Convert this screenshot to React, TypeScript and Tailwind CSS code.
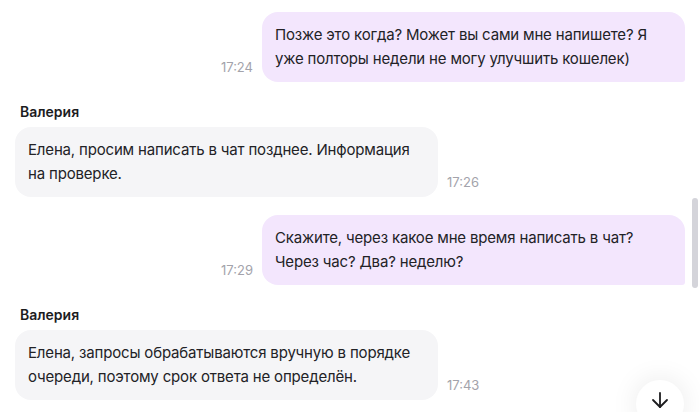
import React from 'react';
import { ArrowDown } from 'lucide-react';

type Msg = { id: number; out: boolean; author?: string; text: string; time: string };

const messages: Msg[] = [
  { id: 1, out: true, text: 'Позже это когда? Может вы сами мне напишете? Я уже полторы недели не могу улучшить кошелек)', time: '17:24' },
  { id: 2, out: false, author: 'Валерия', text: 'Елена, просим написать в чат позднее. Информация на проверке.', time: '17:26' },
  { id: 3, out: true, text: 'Скажите, через какое мне время написать в чат? Через час? Два? неделю?', time: '17:29' },
  { id: 4, out: false, author: 'Валерия', text: 'Елена, запросы обрабатываются вручную в порядке очереди, поэтому срок ответа не определён.', time: '17:43' },
];

const Bubble: React.FC<{ msg: Msg; first: boolean }> = ({ msg, first }) => {
  const time = <span className="mb-[7px] text-[13px] leading-4 text-[#a3a3ab]">{msg.time}</span>;
  return (
    <div className={`flex flex-col ${first ? '' : msg.author ? 'mt-5' : 'mt-[18px]'}`}>
      {msg.author && (
        <div className="ml-5 mb-[5px] text-[14px] font-semibold leading-5 text-[#1c1c1e]">{msg.author}</div>
      )}
      <div className={`flex items-end gap-[9px] ${msg.out ? 'justify-end pr-[15px]' : 'pl-[15px]'}`}>
        {msg.out && time}
        <div
          className={`w-[423px] px-[13px] py-[11px] text-[15px] leading-6 tracking-[-0.17px] text-[#222226] ${
            msg.out ? 'rounded-2xl rounded-br-[3px] bg-[#f3e6fd]' : 'rounded-2xl bg-[#f5f5f7]'
          }`}
        >
          {msg.text}
        </div>
        {!msg.out && time}
      </div>
    </div>
  );
};

export default function App() {
  return (
    <div className="relative h-[412px] w-[700px] overflow-hidden bg-white" style={{ fontFamily: 'Inter, "Noto Sans", sans-serif' }}>
      <div className="flex flex-col pt-3">
        {messages.map((m, i) => (
          <Bubble key={m.id} msg={m} first={i === 0} />
        ))}
      </div>
      <div className="absolute right-[2px] top-[198px] h-[90px] w-[6px] rounded-full bg-[#d4d4da]" />
      <button className="absolute left-[636px] top-[380px] flex h-12 w-12 justify-center rounded-full bg-white pt-2 text-[#1c1c1e] shadow-[0_0_28px_rgba(0,0,0,0.09)]">
        <ArrowDown size={24} strokeWidth={1.8} />
      </button>
    </div>
  );
}
